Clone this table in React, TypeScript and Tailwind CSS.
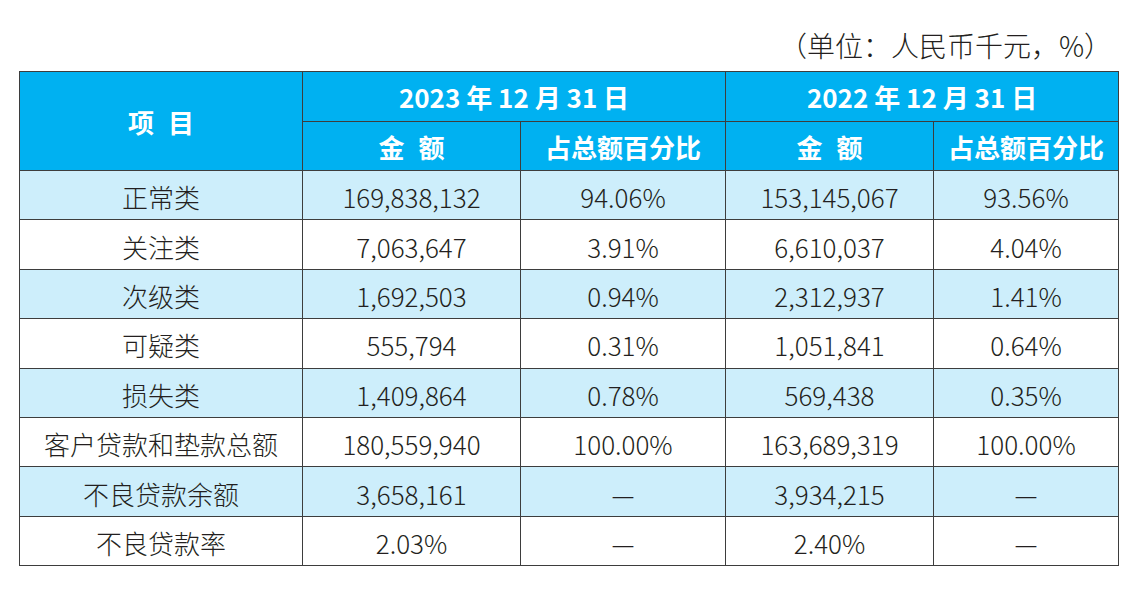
import React from 'react';

const rows = [
  ['正常类', '169,838,132', '94.06%', '153,145,067', '93.56%'],
  ['关注类', '7,063,647', '3.91%', '6,610,037', '4.04%'],
  ['次级类', '1,692,503', '0.94%', '2,312,937', '1.41%'],
  ['可疑类', '555,794', '0.31%', '1,051,841', '0.64%'],
  ['损失类', '1,409,864', '0.78%', '569,438', '0.35%'],
  ['客户贷款和垫款总额', '180,559,940', '100.00%', '163,689,319', '100.00%'],
  ['不良贷款余额', '3,658,161', '—', '3,934,215', '—'],
  ['不良贷款率', '2.03%', '—', '2.40%', '—'],
];

const cell = 'border border-[#3d3d3d] text-center align-middle p-0';

export default function App() {
  return (
    <div
      className="w-[1138px] h-[606px] bg-white overflow-hidden text-[#231f20]"
      style={{ fontFamily: '"Noto Sans CJK SC", "Noto Sans", sans-serif' }}
    >
      <div className="ml-[19px] w-[1099px]">
        <div className="h-[71px] flex items-center justify-end pr-[6px] pt-[18px] text-[28px] font-light leading-none">
          （单位：人民币千元，%）
        </div>
        <table className="w-[1099px] table-fixed border-collapse border-[1.5px] border-[#3d3d3d]">
          <colgroup>
            <col className="w-[283px]" />
            <col className="w-[218px]" />
            <col className="w-[205px]" />
            <col className="w-[208px]" />
            <col className="w-[185px]" />
          </colgroup>
          <thead>
            <tr className="h-[50px] bg-[#00b1f1] text-white font-bold text-[26px]">
              <th rowSpan={2} className={cell + ' font-bold'}>
                项<span className="inline-block w-[14px]" />目
              </th>
              <th colSpan={2} className={cell + ' font-bold'}>
                2023 年 12 月 31 日
              </th>
              <th colSpan={2} className={cell + ' font-bold'}>
                2022 年 12 月 31 日
              </th>
            </tr>
            <tr className="h-[49px] bg-[#00b1f1] text-white text-[26px]">
              <th className={cell + ' font-bold'}>金<span className="inline-block w-[14px]" />额</th>
              <th className={cell + ' font-bold'}>占总额百分比</th>
              <th className={cell + ' font-bold'}>金<span className="inline-block w-[14px]" />额</th>
              <th className={cell + ' font-bold'}>占总额百分比</th>
            </tr>
          </thead>
          <tbody>
            {rows.map((r, i) => (
              <tr
                key={r[0]}
                className={(i % 2 === 0 ? 'bg-[#cdeefb]' : 'bg-white') + ' h-[49.4px] text-[26px] font-light'}
              >
                {r.map((v, j) => (
                  <td key={j} className={cell + ' pt-[3px]'}>
                    {v}
                  </td>
                ))}
              </tr>
            ))}
          </tbody>
        </table>
      </div>
    </div>
  );
}
